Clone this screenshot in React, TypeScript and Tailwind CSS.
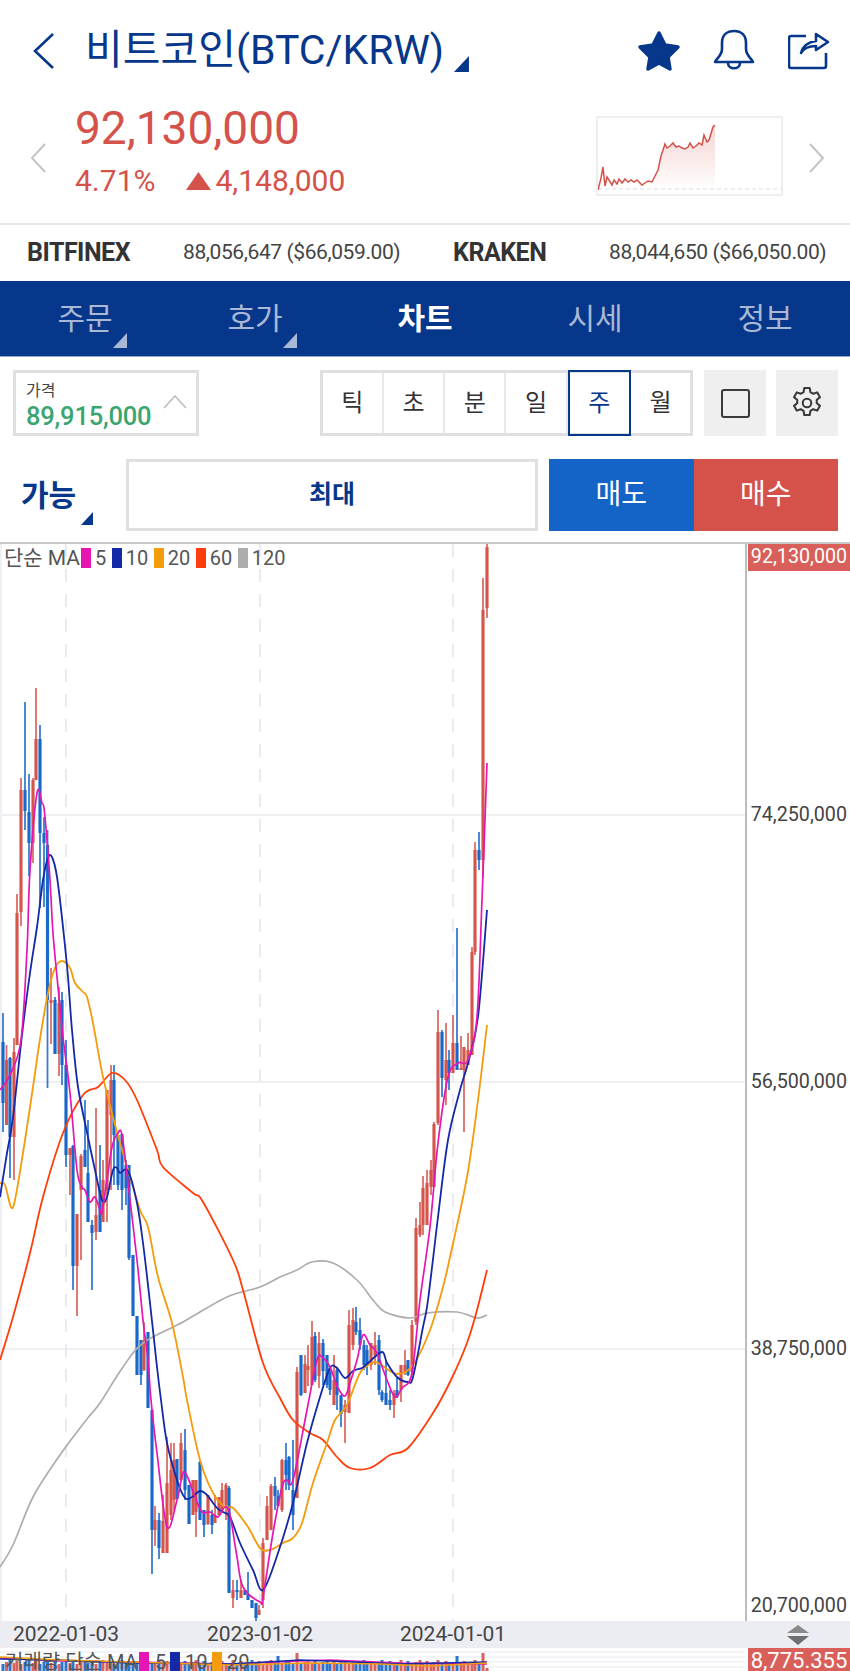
import React from "react";

type Candle = [number, number, number, number, number, "r" | "b"];
type Pt = [number, number];

const RED = "#d4524a";
const BLUE = "#1565c8";
const NAVY = "#07378a";

// x, body top, body bottom, wick top, wick bottom, colour
const candles: Candle[] = [
  [3, 1042, 1103, 1013, 1132, "b"], [6.5, 1060, 1125, 1045, 1125, "r"], [10, 1058, 1137, 1057, 1178, "b"], [14, 1052, 1137, 1038, 1180, "r"],
  [17, 913, 1045, 894, 1045, "r"], [21, 790, 912, 778, 926, "r"], [25, 790, 811, 702, 830, "b"], [29, 812, 843, 774, 876, "b"],
  [33, 780, 843, 778, 863, "r"], [36, 739, 780, 688, 780, "r"], [40, 739, 833, 725, 908, "b"], [44, 833, 843, 817, 907, "b"],
  [47.5, 845, 1000, 830, 1088, "b"], [51, 1000, 1003, 968, 1044, "r"], [55, 1000, 1054, 997, 1054, "b"], [59, 1003, 1054, 987, 1076, "r"],
  [62, 1000, 1065, 992, 1085, "b"], [66, 1065, 1155, 1040, 1167, "b"], [70, 1148, 1155, 1148, 1195, "r"], [73, 1146, 1266, 1145, 1290, "b"],
  [77, 1214, 1266, 1214, 1316, "r"], [81, 1156, 1190, 1154, 1260, "r"], [85, 1150, 1167, 1100, 1167, "b"], [88, 1173, 1222, 1120, 1222, "b"],
  [92, 1225, 1233, 1220, 1290, "b"], [96, 1215, 1232, 1108, 1240, "r"], [100, 1190, 1232, 1145, 1232, "b"], [103, 1180, 1222, 1160, 1222, "r"],
  [107, 1090, 1190, 1090, 1222, "r"], [111, 1080, 1115, 1065, 1190, "r"], [114, 1080, 1135, 1065, 1185, "b"], [118, 1135, 1185, 1135, 1190, "b"],
  [122, 1134, 1190, 1134, 1210, "b"], [126, 1165, 1188, 1160, 1205, "b"], [129, 1165, 1258, 1165, 1260, "b"], [133, 1255, 1316, 1255, 1316, "b"],
  [137, 1316, 1375, 1316, 1375, "b"], [141, 1340, 1375, 1340, 1385, "b"], [144, 1340, 1370, 1322, 1371, "r"], [148, 1332, 1408, 1332, 1408, "b"],
  [152, 1410, 1530, 1410, 1574, "b"], [155, 1520, 1530, 1506, 1546, "r"], [159, 1520, 1548, 1513, 1559, "b"], [163, 1521, 1553, 1495, 1553, "r"],
  [167, 1483, 1553, 1437, 1553, "r"], [171, 1470, 1515, 1443, 1520, "r"], [174, 1460, 1500, 1443, 1510, "r"], [177, 1459, 1499, 1459, 1490, "b"],
  [181, 1443, 1480, 1433, 1480, "r"], [185, 1450, 1490, 1429, 1500, "b"], [189, 1485, 1524, 1485, 1524, "b"], [193, 1480, 1515, 1480, 1515, "r"],
  [196, 1480, 1512, 1480, 1537, "r"], [200, 1462, 1520, 1461, 1520, "b"], [204, 1510, 1525, 1510, 1537, "b"], [208, 1495, 1524, 1495, 1525, "r"],
  [212, 1515, 1525, 1510, 1534, "b"], [215, 1515, 1523, 1495, 1523, "r"], [219, 1497, 1515, 1497, 1515, "r"], [222, 1490, 1510, 1483, 1510, "r"],
  [226, 1485, 1505, 1483, 1520, "r"], [229, 1488, 1593, 1486, 1593, "b"], [233, 1590, 1598, 1580, 1608, "r"], [237, 1590, 1592, 1580, 1600, "b"],
  [241, 1590, 1598, 1580, 1597, "r"], [245, 1590, 1595, 1590, 1595, "b"], [248, 1595, 1600, 1572, 1600, "b"], [252, 1600, 1608, 1600, 1608, "b"],
  [256, 1603, 1618, 1603, 1621, "b"], [259, 1610, 1615, 1605, 1615, "r"], [263, 1543, 1600, 1538, 1608, "r"], [267, 1506, 1540, 1496, 1540, "r"],
  [271, 1486, 1530, 1484, 1530, "r"], [275, 1486, 1496, 1477, 1510, "b"], [278, 1496, 1506, 1490, 1506, "b"], [282, 1460, 1510, 1459, 1512, "r"],
  [286, 1460, 1475, 1443, 1490, "b"], [289, 1457, 1485, 1456, 1490, "b"], [293, 1490, 1515, 1440, 1530, "b"], [297, 1372, 1498, 1367, 1498, "r"],
  [301, 1355, 1395, 1355, 1396, "b"], [305, 1364, 1393, 1355, 1393, "r"], [308, 1366, 1370, 1345, 1386, "r"], [312, 1337, 1385, 1321, 1385, "r"],
  [315, 1336, 1380, 1332, 1382, "b"], [319, 1343, 1376, 1332, 1388, "r"], [323, 1343, 1371, 1339, 1385, "b"], [327, 1355, 1385, 1355, 1388, "b"],
  [330, 1372, 1390, 1370, 1395, "b"], [334, 1380, 1405, 1355, 1405, "r"], [337, 1370, 1395, 1367, 1410, "b"], [341, 1395, 1414, 1395, 1427, "b"],
  [345, 1405, 1412, 1400, 1443, "r"], [349, 1325, 1413, 1310, 1413, "r"], [353, 1320, 1345, 1308, 1350, "r"], [356, 1322, 1332, 1307, 1335, "b"],
  [360, 1330, 1345, 1318, 1350, "b"], [364, 1345, 1365, 1340, 1370, "b"], [367, 1350, 1365, 1345, 1375, "b"], [371, 1343, 1365, 1343, 1370, "r"],
  [375, 1345, 1355, 1332, 1365, "r"], [379, 1340, 1390, 1335, 1395, "b"], [382, 1392, 1400, 1390, 1402, "b"], [386, 1393, 1405, 1360, 1405, "b"],
  [390, 1400, 1405, 1390, 1410, "b"], [394, 1393, 1405, 1390, 1418, "r"], [397, 1390, 1397, 1378, 1398, "b"], [401, 1365, 1390, 1365, 1402, "r"],
  [405, 1365, 1372, 1350, 1375, "r"], [408, 1360, 1375, 1360, 1376, "b"], [412, 1325, 1372, 1320, 1375, "r"], [416, 1228, 1322, 1218, 1325, "r"],
  [420, 1225, 1235, 1202, 1237, "r"], [423, 1188, 1225, 1176, 1235, "r"], [427, 1183, 1225, 1170, 1225, "r"], [431, 1170, 1187, 1160, 1195, "r"],
  [434, 1124, 1187, 1122, 1187, "r"], [438, 1032, 1123, 1010, 1125, "r"], [442, 1032, 1078, 1030, 1097, "b"], [446, 1060, 1080, 1023, 1105, "r"],
  [449, 1060, 1073, 1050, 1090, "b"], [453, 1043, 1073, 1015, 1073, "r"], [457, 1043, 1070, 928, 1070, "b"], [461, 1068, 1070, 1036, 1070, "r"],
  [464, 1047, 1070, 1047, 1132, "r"], [468, 1050, 1065, 1033, 1065, "r"], [472, 952, 1055, 947, 1055, "r"], [475, 850, 952, 842, 955, "r"],
  [479, 850, 860, 832, 870, "b"], [483, 610, 860, 578, 878, "r"], [487, 547, 608, 543, 618, "r"],
];

const ma5: Pt[] = [
  [0, 1090], [10, 1075], [21, 1040], [27, 950], [30, 870], [37, 793], [42, 803], [44, 808], [47, 840], [50, 880], [53, 933], [58, 987], [63, 1037],
  [70, 1093], [77, 1170], [82, 1187], [85, 1190], [90, 1202], [95, 1197], [100, 1210], [102, 1212], [107, 1180], [112, 1147], [118, 1133], [122, 1135],
  [128, 1183], [137, 1260], [143, 1320], [148, 1360], [151, 1400], [157, 1453], [167, 1527], [177, 1500], [183, 1473], [188, 1478], [195, 1497],
  [202, 1512], [210, 1512], [218, 1517], [225, 1507], [230, 1515], [237, 1557], [243, 1587], [260, 1602], [263, 1597], [273, 1533], [282, 1487],
  [287, 1480], [293, 1480], [307, 1410], [317, 1360], [323, 1358], [330, 1367], [338, 1388], [345, 1396], [350, 1383], [357, 1360], [363, 1335],
  [370, 1345], [377, 1353], [387, 1380], [395, 1397], [402, 1388], [412, 1373], [420, 1300], [430, 1227], [438, 1143], [448, 1077], [458, 1063],
  [468, 1060], [477, 1017], [482, 900], [487, 763],
];
const ma10: Pt[] = [
  [0, 1197], [7, 1153], [13, 1117], [22, 1035], [30, 973], [37, 927], [43, 880], [48, 858], [52, 857], [57, 877], [63, 927], [68, 977], [72, 1030],
  [78, 1087], [88, 1137], [95, 1170], [102, 1200], [107, 1197], [113, 1170], [117, 1168], [120, 1173], [128, 1171], [137, 1203], [143, 1243], [150, 1303],
  [157, 1367], [161, 1400], [167, 1443], [177, 1480], [185, 1498], [192, 1497], [200, 1491], [207, 1495], [217, 1508], [223, 1512], [230, 1517],
  [240, 1543], [253, 1570], [263, 1590], [278, 1553], [293, 1503], [307, 1443], [320, 1397], [330, 1368], [337, 1368], [345, 1378], [353, 1371],
  [362, 1368], [368, 1363], [382, 1352], [387, 1363], [397, 1377], [408, 1382], [413, 1377], [423, 1327], [428, 1300], [438, 1217], [448, 1140],
  [460, 1090], [468, 1063], [478, 1017], [487, 910],
];
const ma20: Pt[] = [
  [0, 1183], [5, 1185], [11, 1207], [15, 1200], [23, 1153], [33, 1087], [40, 1039], [48, 993], [55, 968], [62, 961], [70, 968], [75, 983], [83, 992],
  [87, 997], [93, 1023], [103, 1077], [117, 1132], [128, 1170], [140, 1210], [148, 1227], [158, 1277], [172, 1323], [183, 1377], [187, 1400], [200, 1460],
  [213, 1493], [225, 1507], [233, 1508], [248, 1527], [260, 1548], [270, 1550], [283, 1543], [293, 1538], [302, 1523], [313, 1483], [327, 1443],
  [335, 1420], [347, 1405], [360, 1373], [372, 1363], [378, 1363], [397, 1374], [413, 1365], [430, 1330], [443, 1287], [450, 1257], [467, 1177],
  [478, 1100], [487, 1025],
];
const ma60: Pt[] = [
  [0, 1360], [13, 1317], [30, 1253], [43, 1197], [63, 1133], [83, 1095], [98, 1087], [112, 1073], [125, 1080], [137, 1100], [157, 1150], [163, 1167],
  [193, 1193], [203, 1202], [233, 1260], [243, 1290], [263, 1363], [280, 1398], [293, 1420], [310, 1433], [323, 1440], [337, 1457], [350, 1468],
  [370, 1468], [390, 1455], [408, 1448], [433, 1413], [450, 1382], [467, 1343], [477, 1310], [487, 1270],
];
const ma120: Pt[] = [
  [0, 1567], [13, 1545], [33, 1497], [60, 1455], [87, 1419], [100, 1403], [123, 1367], [143, 1343], [183, 1322], [227, 1297], [260, 1287], [280, 1277],
  [297, 1270], [312, 1262], [333, 1263], [357, 1280], [373, 1300], [385, 1312], [410, 1318], [427, 1313], [457, 1312], [477, 1318], [487, 1315],
];

const spark: Pt[] = [
  [0, 72], [3, 60], [5, 49], [7, 68], [9, 59], [11, 62], [14, 67], [16, 62], [19, 66], [21, 61], [24, 65], [27, 61], [30, 64], [33, 62], [36, 64], [39, 62],
  [44, 67], [47, 65], [50, 63], [54, 64], [57, 58], [60, 52], [63, 38], [65, 32], [67, 26], [69, 30], [72, 28], [75, 25], [78, 29], [81, 28], [84, 30], [87, 31],
  [90, 29], [92, 25], [95, 30], [98, 28], [101, 25], [104, 27], [106, 17], [109, 24], [111, 22], [115, 9], [117, 7],
];

// smooth line through the points
function smooth(pts: Pt[]) {
  let d = `M${pts[0][0]} ${pts[0][1]}`;
  for (let i = 0; i < pts.length - 1; i++) {
    const p0 = pts[i - 1] || pts[i];
    const p1 = pts[i];
    const p2 = pts[i + 1];
    const p3 = pts[i + 2] || p2;
    const c1x = p1[0] + (p2[0] - p0[0]) / 6;
    const c1y = p1[1] + (p2[1] - p0[1]) / 6;
    const c2x = p2[0] - (p3[0] - p1[0]) / 6;
    const c2y = p2[1] - (p3[1] - p1[1]) / 6;
    d += ` C${c1x.toFixed(1)} ${c1y.toFixed(1)} ${c2x.toFixed(1)} ${c2y.toFixed(1)} ${p2[0]} ${p2[1]}`;
  }
  return d;
}

function Corner({ color = NAVY, className = "" }: { color?: string; className?: string }) {
  return (
    <svg viewBox="0 0 14 15" className={className}>
      <polygon points="14,0 14,15 0,15" fill={color} />
    </svg>
  );
}

function Sparkline() {
  const line = spark.map((p) => p.join(",")).join(" ");
  return (
    <div className="w-[187px] h-[80px] border-2 border-[#eeeeee]">
      <svg viewBox="0 0 183 76" className="w-full h-full">
        <defs>
          <linearGradient id="sparkFill" x1="0" y1="0" x2="0" y2="1">
            <stop offset="0%" stopColor="#d4524a" stopOpacity="0.25" />
            <stop offset="100%" stopColor="#d4524a" stopOpacity="0" />
          </linearGradient>
        </defs>
        <polygon points={`0,71 ${line} 117,71`} fill="url(#sparkFill)" />
        <line x1="0" y1="71" x2="183" y2="71" stroke="#dddddd" strokeWidth="1" strokeDasharray="4 3" />
        <polyline points={line} fill="none" stroke={RED} strokeWidth="1.5" />
      </svg>
    </div>
  );
}

function PriceChart() {
  return (
    <svg viewBox="0 544 745 1077" className="w-[745px] h-[1077px] block">
      <line x1="1" y1="544" x2="1" y2="1621" stroke="#eef0f4" strokeWidth="2" />
      {[815, 1082, 1349].map((y) => (
        <line key={y} x1="0" y1={y} x2="745" y2={y} stroke="#eff0f4" strokeWidth="2" />
      ))}
      {[66, 260, 453].map((x) => (
        <line key={x} x1={x} y1="544" x2={x} y2="1621" stroke="#e9ebf0" strokeWidth="2" strokeDasharray="13 12" />
      ))}
      {candles.map(([x, top, bottom, hi, lo, c], i) => (
        <g key={i} fill={c === "r" ? RED : BLUE}>
          <rect x={x - 0.9} y={hi} width="1.8" height={lo - hi} opacity="0.85" />
          <rect x={x - 1.6} y={top} width="3.2" height={Math.max(bottom - top, 1)} opacity="0.95" />
        </g>
      ))}
      <path d={smooth(ma120)} fill="none" stroke="#adadad" strokeWidth="1.7" />
      <path d={smooth(ma60)} fill="none" stroke="#ff3d0a" strokeWidth="1.8" />
      <path d={smooth(ma20)} fill="none" stroke="#f39c0c" strokeWidth="1.8" />
      <path d={smooth(ma10)} fill="none" stroke="#1428a8" strokeWidth="1.8" />
      <path d={smooth(ma5)} fill="none" stroke="#e516b4" strokeWidth="1.7" />
    </svg>
  );
}

function VolumeChart() {
  const peaks: Record<number, number> = { 132: 18, 151: 20, 229: 5, 278: 15, 297: 18, 415: 10, 457: 15, 483: 18, 487: 3 };
  return (
    <svg viewBox="0 1648 745 23" className="w-[745px] h-[23px] block">
      {[1652, 1657, 1662, 1667].map((y) => (
        <line key={y} x1="0" y1={y} x2="745" y2={y} stroke="#eff0f4" strokeWidth="1.5" />
      ))}
      {candles.map(([x, , , , , c], i) => {
        const h = peaks[x] ?? 7 + ((i * 7) % 5);
        return <rect key={i} x={x - 1.5} y={1671 - h} width="3" height={h} fill={c === "r" ? RED : BLUE} opacity="0.9" />;
      })}
      <polyline points="0,1658 60,1661 130,1662 230,1664 300,1661 330,1660 400,1663 487,1664" fill="none" stroke="#e516b4" strokeWidth="1.5" />
      <polyline points="0,1659 60,1660 130,1663 230,1664 300,1660 330,1661 400,1664 487,1662" fill="none" stroke="#1428a8" strokeWidth="1.5" />
      <polyline points="0,1657 60,1660 130,1662 230,1665 310,1663 380,1664 430,1666 487,1663" fill="none" stroke="#f39c0c" strokeWidth="1.5" />
    </svg>
  );
}

const legend = [
  { color: "bg-[#e516b4]", label: "5" },
  { color: "bg-[#1428a8]", label: "10" },
  { color: "bg-[#f39c0c]", label: "20" },
  { color: "bg-[#ff3d0a]", label: "60" },
  { color: "bg-[#adadad]", label: "120" },
];

export default function App() {
  return (
    <div className="w-[850px] h-[1671px] overflow-hidden bg-white flex flex-col font-[Roboto,'Noto_Sans_CJK_KR',sans-serif]">
      {/* Title bar */}
      <div className="h-[101px] shrink-0 flex items-center pl-[32px] pr-[20px]">
        <svg viewBox="0 0 24 38" className="w-[24px] h-[38px] mr-[29px]">
          <path d="M21 2 L3 19 L21 36" fill="none" stroke={NAVY} strokeWidth="2.6" />
        </svg>
        <span className="text-[41px] leading-none text-[#07378a] whitespace-nowrap">비트코인(BTC/KRW)</span>
        <Corner className="w-[15px] h-[16px] ml-[10px] mt-[27px]" />
        <div className="ml-auto flex items-center">
          <svg viewBox="0 0 44 42" className="w-[44px] h-[42px]">
            <path d="M22 3 L28 15 L41 17 L31 27 L33 39 L22 33 L11 39 L13 27 L3 17 L16 15 Z" fill={NAVY} stroke={NAVY} strokeWidth="3.5" strokeLinejoin="round" />
          </svg>
          <svg viewBox="0 0 42 43" className="w-[42px] h-[43px] ml-[32px]">
            <path d="M2 33 C2 31 9 27 9 20 V14 C9 6 14 2 21 2 C28 2 33 6 33 14 V20 C33 27 40 31 40 33 Z" fill="none" stroke={NAVY} strokeWidth="2.6" strokeLinejoin="round" />
            <path d="M15 34 C15 41 27 41 27 34" fill="none" stroke={NAVY} strokeWidth="2.6" />
          </svg>
          <svg viewBox="0 0 42 40" className="w-[42px] h-[40px] ml-[33px]">
            <path d="M18 5 H3 a2 2 0 0 0 -2 2 V35 a2 2 0 0 0 2 2 H36 a2 2 0 0 0 2 -2 V22" fill="none" stroke={NAVY} strokeWidth="2.6" />
            <path d="M13 22 C15 14 21 11 28 10 V3 L40 11 L28 19 V15 C22 15 16 17 13 22 Z" fill="none" stroke={NAVY} strokeWidth="2.6" strokeLinejoin="round" />
          </svg>
        </div>
      </div>

      {/* Current price */}
      <div className="h-[122px] shrink-0 flex items-start pl-[30px] pr-[25px]">
        <svg viewBox="0 0 16 30" className="w-[16px] h-[30px] mt-[42px] mr-[29px]">
          <path d="M15 1 L2 15 L15 29" fill="none" stroke="#c4c4c4" strokeWidth="2" />
        </svg>
        <div className="flex flex-col text-[#d4524a]">
          <span className="text-[46px] leading-[47px] mt-[4px]">92,130,000</span>
          <div className="flex items-center text-[30px] leading-none mt-[14px]">
            <span>4.71%</span>
            <svg viewBox="0 0 25 18" className="w-[25px] h-[18px] ml-[31px] mr-[4px]">
              <polygon points="12.5,0 25,18 0,18" fill={RED} />
            </svg>
            <span>4,148,000</span>
          </div>
        </div>
        <div className="ml-auto mt-[15px] flex items-start">
          <Sparkline />
          <svg viewBox="0 0 16 30" className="w-[16px] h-[30px] mt-[27px] ml-[26px]">
            <path d="M1 1 L14 15 L1 29" fill="none" stroke="#c4c4c4" strokeWidth="2" />
          </svg>
        </div>
      </div>

      {/* Overseas exchanges */}
      <div className="h-[58px] shrink-0 border-t-2 border-[#e9e9e9] flex items-center text-[#333333] pl-[27px]">
        <span className="text-[25px] font-bold tracking-[-0.5px] w-[156px]">BITFINEX</span>
        <span className="text-[21px] tracking-[-0.4px] text-[#444444] w-[270px]">88,056,647 ($66,059.00)</span>
        <span className="text-[25px] font-bold tracking-[-0.5px] w-[156px]">KRAKEN</span>
        <span className="text-[21px] tracking-[-0.4px] text-[#444444]">88,044,650 ($66,050.00)</span>
      </div>

      {/* Tabs */}
      <div className="h-[76px] shrink-0 bg-[#07378a] border-b border-[#8fa8d0] grid grid-cols-5 text-[30px] text-[#a8b8d5]">
        {["주문", "호가", "차트", "시세", "정보"].map((tab, i) => (
          <div key={tab} className={`relative flex items-center justify-center ${i === 2 ? "text-white font-bold" : ""}`}>
            {tab}
            {i < 2 && <Corner color="#a8b8d5" className="absolute left-[113px] top-[52px] w-[14px] h-[15px]" />}
          </div>
        ))}
      </div>

      {/* Price and period */}
      <div className="shrink-0 flex items-stretch h-[66px] mt-[13px] pl-[13px] pr-[12px]">
        <div className="w-[186px] border-[3px] border-[#e0e0e0] flex items-end justify-between pl-[10px] pr-[9px] relative">
          <div className="flex flex-col">
            <span className="text-[16px] leading-[20px] text-[#444444]">가격</span>
            <span className="text-[25.5px] leading-[30px] mb-[2px] font-medium tracking-[-0.2px] text-[#3aa66f]">89,915,000</span>
          </div>
          <svg viewBox="0 0 24 14" className="w-[24px] h-[14px] mb-[24px]">
            <path d="M1 13 L12 1 L23 13" fill="none" stroke="#bdbdbd" strokeWidth="1.6" />
          </svg>
        </div>
        <div className="ml-[121px] flex w-[374px] border-[3px] border-[#e0e0e0]">
          {["틱", "초", "분", "일", "주", "월"].map((label) =>
            label === "주" ? (
              <div key={label} className="flex-1 -my-[3px] flex items-center justify-center border-2 border-[#07378a] text-[#07378a] text-[24px]">
                {label}
              </div>
            ) : (
              <div key={label} className="flex-1 flex items-center justify-center border-r-2 border-[#e8e8e8] last:border-r-0 text-[#333333] text-[24px]">
                {label}
              </div>
            )
          )}
        </div>
        <div className="ml-[11px] w-[62px] bg-[#efefef] flex items-center justify-center">
          <div className="w-[29px] h-[29px] rounded-[3px] border-[2.5px] border-[#3a3a3a]" />
        </div>
        <div className="ml-[10px] w-[62px] bg-[#efefef] flex items-center justify-center">
          <svg viewBox="0 0 24 24" className="w-[38px] h-[38px]" fill="none" stroke="#3a3a3a" strokeWidth="1.3">
            <path d="M10.3 2.5h3.4l.5 2.7c.6.2 1.2.6 1.7 1l2.6-.9 1.7 3-2.1 1.8c.1.6.1 1.3 0 1.9l2.1 1.8-1.7 3-2.6-.9c-.5.4-1.1.8-1.7 1l-.5 2.7h-3.4l-.5-2.7c-.6-.2-1.2-.6-1.7-1l-2.6.9-1.7-3 2.1-1.8c-.1-.6-.1-1.3 0-1.9L3.8 8.3l1.7-3 2.6.9c.5-.4 1.1-.8 1.7-1z" strokeLinejoin="round" />
            <circle cx="12" cy="12" r="2.7" />
          </svg>
        </div>
      </div>

      {/* Order */}
      <div className="shrink-0 flex items-stretch h-[72px] mt-[23px] pr-[12px]">
        <div className="w-[126px] relative flex items-center pl-[21px] text-[30px] font-bold text-[#07378a]">
          가능
          <Corner className="absolute left-[81px] top-[53px] w-[12px] h-[13px]" />
        </div>
        <div className="w-[412px] border-[3px] border-[#e0e0e0] flex items-center justify-center text-[25px] font-bold text-[#07378a]">최대</div>
        <div className="ml-[11px] flex-1 bg-[#1464c8] flex items-center justify-center text-[28px] text-white">매도</div>
        <div className="flex-1 bg-[#d4524a] flex items-center justify-center text-[28px] text-white">매수</div>
      </div>

      {/* Chart */}
      <div className="shrink-0 mt-[11px] border-t-[2px] border-[#c8c8c8] relative flex h-[1079px]">
        <PriceChart />
        <div className="w-[105px] border-l-2 border-[#bdbdbd] flex flex-col items-end text-[19.7px] leading-[26px] text-[#444444] pr-[3px]">
          <div className="w-[102px] -mr-[3px] h-[27px] bg-[#d9605a] text-white text-center">92,130,000</div>
          <span className="mt-[231px]">74,250,000</span>
          <span className="mt-[241px]">56,500,000</span>
          <span className="mt-[241px]">38,750,000</span>
          <span className="mt-[231px]">20,700,000</span>
        </div>
        <div className="absolute left-[4px] top-[1px] flex items-center h-[26px] text-[20px] text-[#555555] leading-none">
          <span className="w-[77px] text-[21px] whitespace-nowrap">단순 MA</span>
          {legend.map((item) => (
            <React.Fragment key={item.label}>
              <span className={`w-[10px] h-[20px] mr-[4px] ${item.color}`} />
              <span className="mr-[5.5px]">{item.label}</span>
            </React.Fragment>
          ))}
        </div>
      </div>

      {/* Date axis */}
      <div className="h-[27px] shrink-0 bg-[#ecedf2] flex items-center text-[21px] text-[#444444] pl-[13px]">
        <span className="w-[194px]">2022-01-03</span>
        <span className="w-[193px]">2023-01-02</span>
        <span>2024-01-01</span>
        <svg viewBox="0 0 24 20" className="w-[24px] h-[20px] ml-auto mr-[40px]">
          <polygon points="12,0 23,8 1,8" fill="#8a8a8a" />
          <polygon points="12,20 23,11 1,11" fill="#6e6e6e" />
        </svg>
      </div>

      {/* Volume */}
      <div className="h-[23px] shrink-0 relative flex overflow-hidden">
        <VolumeChart />
        <div className="ml-[3px] flex-1 bg-[#d9605a] text-white text-[22px] leading-[26px] text-center">8,775.355</div>
        <div className="absolute left-[5px] top-[1px] flex text-[20px] leading-[26px] text-[#555555]">
          <span className="w-[134px] whitespace-nowrap">거래량 단순 MA</span>
          <span className="w-[10px] h-[20px] mt-[3px] bg-[#e516b4]" />
          <span className="w-[21px] pl-[6px]">5</span>
          <span className="w-[10px] h-[20px] mt-[3px] bg-[#1428a8]" />
          <span className="w-[32px] pl-[5px]">10</span>
          <span className="w-[10px] h-[20px] mt-[3px] bg-[#f39c0c]" />
          <span className="pl-[5px]">20</span>
        </div>
      </div>
    </div>
  );
}
